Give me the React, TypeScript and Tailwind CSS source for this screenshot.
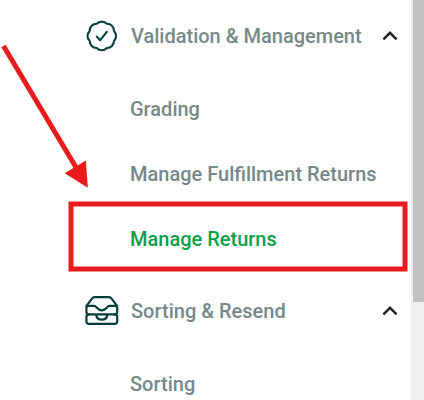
import clsx from 'clsx';
import { ReactNode, useState } from 'react';

type MenuItem = { label: string; active?: boolean };

function BadgeCheckIcon() {
  return (
    <svg
      aria-hidden="true"
      className="h-9 w-9 shrink-0"
      viewBox="0 0 36 36"
      fill="none"
      stroke="#053f3c"
      strokeWidth="2.1"
      strokeLinecap="round"
      strokeLinejoin="round"
    >
      <path d="M12.8 5.8A6.8 6.8 0 0 1 22.8 5.8A6.8 6.8 0 0 1 29.9 12.9A6.8 6.8 0 0 1 29.9 22.9A6.8 6.8 0 0 1 22.8 30A6.8 6.8 0 0 1 12.8 30A6.8 6.8 0 0 1 5.7 22.9A6.8 6.8 0 0 1 5.7 12.9A6.8 6.8 0 0 1 12.8 5.8Z" />
      <path d="M12.8 18.6L16.2 22.2L22.8 13.8" />
    </svg>
  );
}

function TrayIcon() {
  return (
    <svg
      aria-hidden="true"
      className="h-9 w-9 shrink-0"
      viewBox="0 0 36 36"
      fill="none"
      stroke="#053f3c"
      strokeWidth="2.2"
      strokeLinecap="round"
      strokeLinejoin="round"
    >
      <path d="M2.4 13L8 5.6Q9 4.2 10.8 4.2H24.8Q26.6 4.2 27.6 5.6L33.2 13" />
      <path d="M4.8 12.8H10.2C12.6 12.8 13 17.3 17.8 17.3S23 12.8 25.4 12.8H30.8Q33.2 12.8 33.2 15.2V18.8Q33.2 21.4 30.6 21.4H5Q2.4 21.4 2.4 18.8V15.2Q2.4 12.8 4.8 12.8Z" />
      <path d="M5 21.4Q2.4 21.4 2.4 24V28.2Q2.4 30.8 5 30.8H30.6Q33.2 30.8 33.2 28.2V24Q33.2 21.4 30.6 21.4" />
      <path d="M12.2 22C12.6 25 14.8 26.6 17.8 26.6S23 25 23.4 22" />
    </svg>
  );
}

function MenuGroup({ title, icon, items }: { title: string; icon: ReactNode; items: MenuItem[] }) {
  const [open, setOpen] = useState(true);

  return (
    <section>
      <button
        type="button"
        aria-expanded={open}
        onClick={() => setOpen(!open)}
        className="flex h-[72px] w-full items-center pr-3 pl-[84px] text-left"
      >
        {icon}
        <span className="ml-[11px] grow whitespace-nowrap">{title}</span>
        <svg
          aria-hidden="true"
          className={clsx('h-[18px] w-[18px] shrink-0', !open && 'rotate-180')}
          viewBox="0 0 18 18"
          fill="none"
          stroke="#212121"
          strokeWidth="2.4"
        >
          <path d="M2.4 12.4L9 5.8L15.6 12.4" />
        </svg>
      </button>
      {open && (
        <ul className="py-1">
          {items.map((item) => (
            <li key={item.label}>
              <a
                href="#"
                aria-current={item.active ? 'page' : undefined}
                className={clsx(
                  'flex h-[65px] items-center pl-[130px] whitespace-nowrap',
                  item.active && 'text-[#0a9f4b]'
                )}
              >
                {item.label}
              </a>
            </li>
          ))}
        </ul>
      )}
    </section>
  );
}

// Arrow and frame drawn over the menu
function Callout() {
  return (
    <svg
      aria-hidden="true"
      className="pointer-events-none absolute top-0 left-0 h-[400px] w-[411px]"
      viewBox="0 0 411 400"
      fill="none"
      stroke="#e81c1c"
      strokeWidth="5"
    >
      <path d="M3.5 46L77 169" />
      <path d="M87.9 187.8L64.7 173.3L85.8 160.4Z" fill="#e81c1c" stroke="none" />
      <rect x="71" y="204" width="334" height="65" />
    </svg>
  );
}

export default function App() {
  return (
    <div className="flex h-screen overflow-hidden bg-white font-[Roboto,sans-serif] text-xl font-medium text-[#768989]">
      <nav aria-label="Main menu" className="relative min-w-0 grow overflow-hidden">
        <MenuGroup
          title="Validation & Management"
          icon={<BadgeCheckIcon />}
          items={[
            { label: 'Grading' },
            { label: 'Manage Fulfillment Returns' },
            { label: 'Manage Returns', active: true }
          ]}
        />
        <MenuGroup title="Sorting & Resend" icon={<TrayIcon />} items={[{ label: 'Sorting' }]} />
        <Callout />
      </nav>
      <div className="w-[13px] shrink-0 bg-[#f0f0f0] pl-0.5">
        <div className="h-[302px] bg-[#c1c1c1]" />
      </div>
    </div>
  );
}
